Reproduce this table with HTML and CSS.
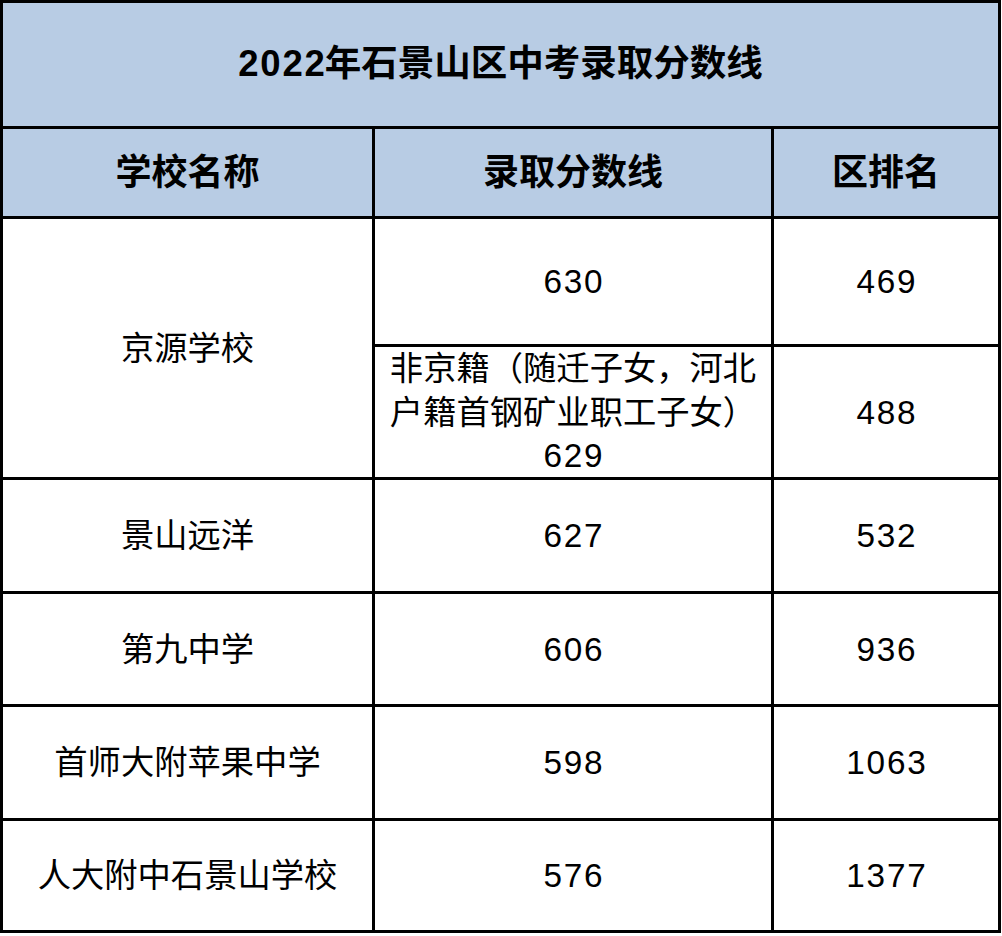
FILE: index.html
```html
<!DOCTYPE html>
<html lang="zh-CN">
<head>
<meta charset="utf-8">
<title>2022年石景山区中考录取分数线</title>
<link rel="stylesheet" href="styles.css">
</head>
<body>
<div class="table">
  <div class="cell title span3"><span class="num">2022</span>年石景山区中考录取分数线</div>
  <div class="cell head">学校名称</div>
  <div class="cell head">录取分数线</div>
  <div class="cell head">区排名</div>

  <div class="cell span-rows">京源学校</div>
  <div class="cell"><span class="num">630</span></div>
  <div class="cell"><span class="num">469</span></div>
  <div class="cell multi">非京籍（随迁子女，河北<br>户籍首钢矿业职工子女）<br><span class="num">629</span></div>
  <div class="cell"><span class="num">488</span></div>

  <div class="cell">景山远洋</div>
  <div class="cell"><span class="num">627</span></div>
  <div class="cell"><span class="num">532</span></div>

  <div class="cell">第九中学</div>
  <div class="cell"><span class="num">606</span></div>
  <div class="cell"><span class="num">936</span></div>

  <div class="cell">首师大附苹果中学</div>
  <div class="cell"><span class="num">598</span></div>
  <div class="cell"><span class="num">1063</span></div>

  <div class="cell">人大附中石景山学校</div>
  <div class="cell"><span class="num">576</span></div>
  <div class="cell"><span class="num">1377</span></div>
</div>
</body>
</html>
```
FILE: styles.css
```css
html, body {
  margin: 0;
  padding: 0;
  background: #ffffff;
}

.table {
  width: 1001px;
  box-sizing: border-box;
  background: #000000;
  padding: 3px;
  display: grid;
  gap: 3px;
  grid-template-columns: 369px 396px 224px;
  grid-template-rows: 123px 87px 125px 130px 111px 110px 111px 109px;
  font-family: "Liberation Sans", "Noto Sans CJK SC", sans-serif;
  color: #000000;
}

.cell {
  background: #ffffff;
  display: flex;
  align-items: center;
  justify-content: center;
  text-align: center;
  font-size: 33.3px;
  line-height: 43px;
}

.num {
  letter-spacing: 1.8px;
  margin-right: -1.8px;
}

.title {
  grid-column: 1 / 4;
  background: #b8cce4;
  font-weight: bold;
  font-size: 36.5px;
  padding-bottom: 2px;
  box-sizing: border-box;
}

.head {
  background: #b8cce4;
  font-weight: bold;
  font-size: 36px;
}

.span-rows {
  grid-row: span 2;
}

.multi {
  display: block;
  padding-top: 0;
  line-height: 43.5px;
  white-space: nowrap;
}
```
